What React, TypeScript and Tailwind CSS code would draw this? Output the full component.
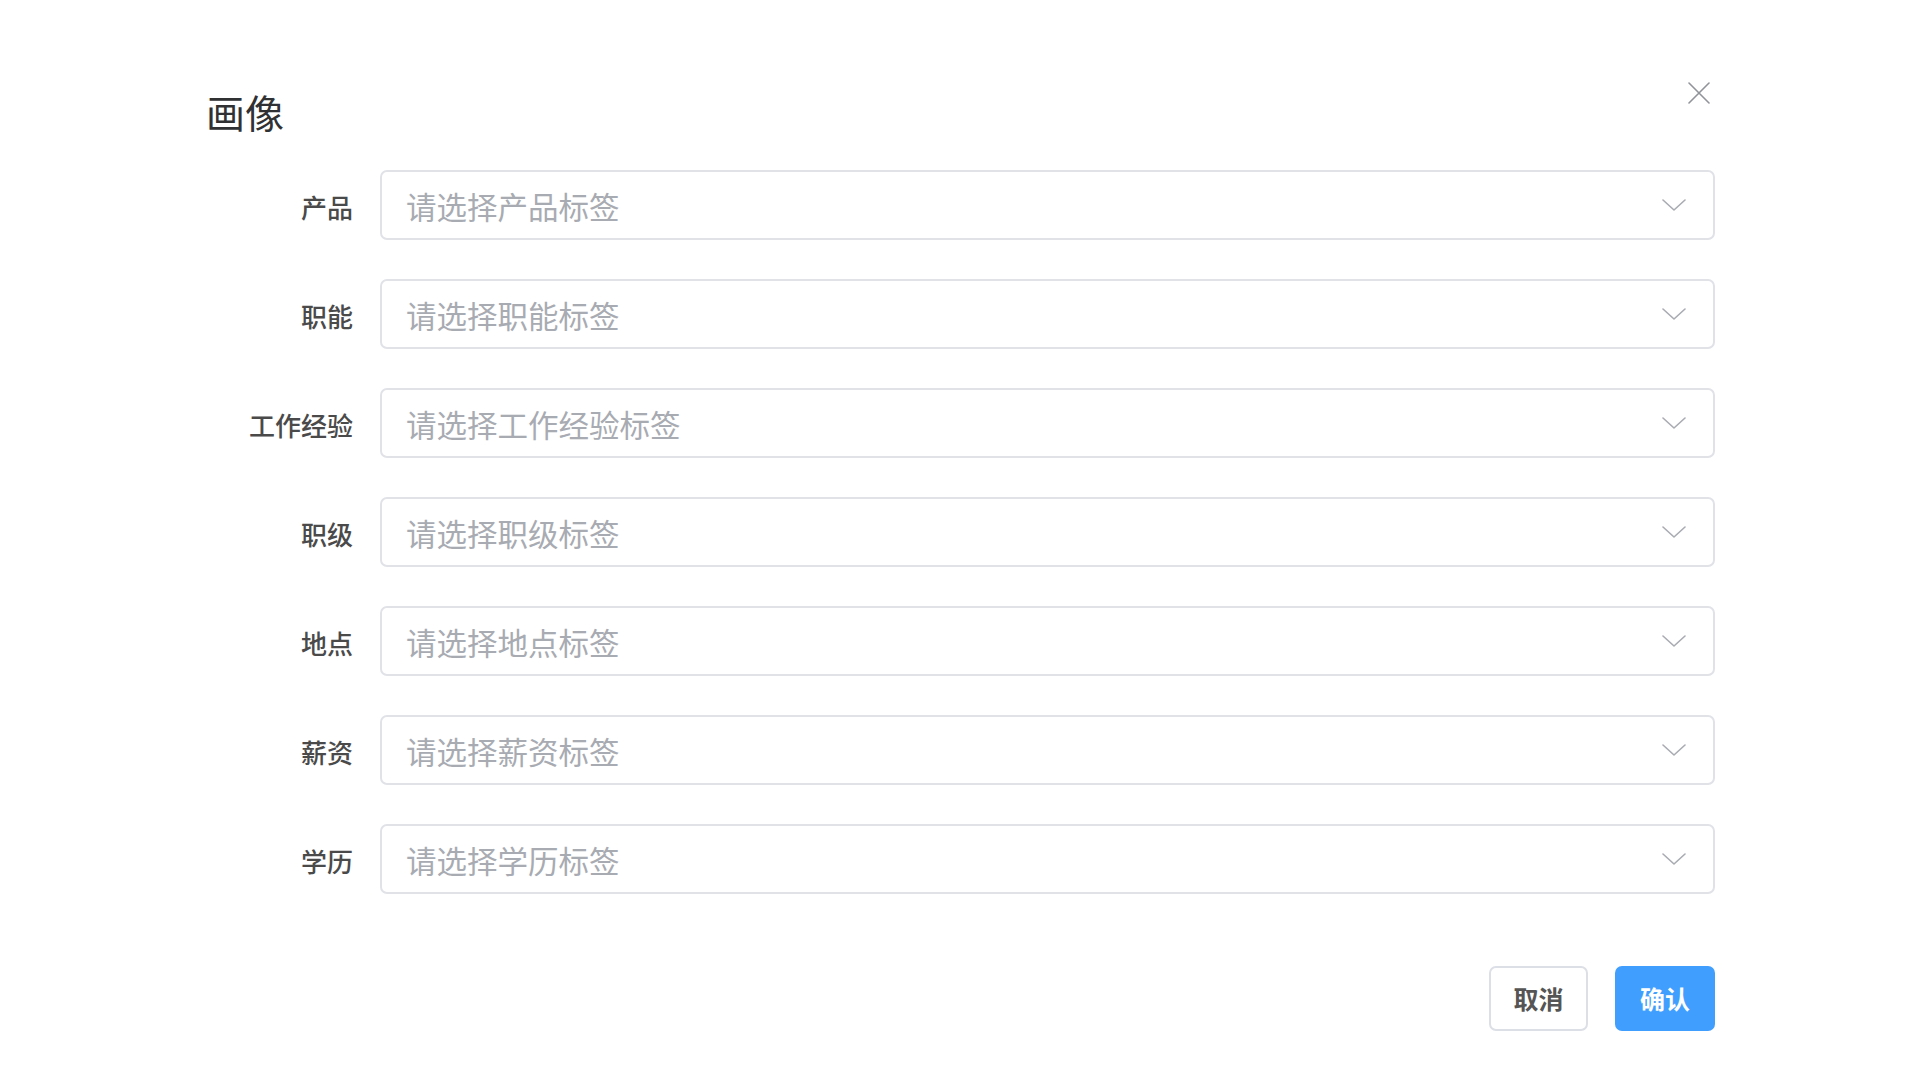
import React from "react";

const fields = [
  { label: "产品", placeholder: "请选择产品标签" },
  { label: "职能", placeholder: "请选择职能标签" },
  { label: "工作经验", placeholder: "请选择工作经验标签" },
  { label: "职级", placeholder: "请选择职级标签" },
  { label: "地点", placeholder: "请选择地点标签" },
  { label: "薪资", placeholder: "请选择薪资标签" },
  { label: "学历", placeholder: "请选择学历标签" },
];

function Chevron() {
  return (
    <svg width="24" height="12" viewBox="0 0 24 12" fill="none">
      <polyline
        points="1,1 12,11 23,1"
        stroke="#a8abb2"
        strokeWidth="1.6"
        strokeLinecap="round"
        strokeLinejoin="round"
      />
    </svg>
  );
}

export default function App() {
  return (
    <div
      className="w-[1920px] h-[1080px] bg-white overflow-hidden"
      style={{ fontFamily: '"Noto Sans CJK SC", "Noto Sans", sans-serif' }}
    >
      <div className="pl-[206px] pr-[205px] pt-[82px]">
        {/* Header */}
        <div className="flex justify-between items-start">
          <h1 className="mt-[10px] text-[39px] leading-[39px] font-normal text-[#303133]">
            画像
          </h1>
          <button className="mr-[5px] text-[#909399]">
            <svg width="22" height="22" viewBox="0 0 22 22" fill="none">
              <path
                d="M1 1L21 21M21 1L1 21"
                stroke="currentColor"
                strokeWidth="1.6"
                strokeLinecap="round"
              />
            </svg>
          </button>
        </div>

        {/* Form */}
        <div className="mt-[39px] flex flex-col gap-[39px]">
          {fields.map((f) => (
            <div key={f.label} className="flex items-center gap-[27px]">
              <label className="w-[147px] pt-[4px] text-right text-[26px] leading-none font-medium text-[#4a4a4a]">
                {f.label}
              </label>
              <div className="flex-1 h-[70px] border-2 border-[#e0e2e8] rounded-[7px] pl-[24px] pr-[27px] flex items-center justify-between">
                <span className="pt-[3px] text-[30.5px] leading-none text-[#a8abb2]">
                  {f.placeholder}
                </span>
                <Chevron />
              </div>
            </div>
          ))}
        </div>

        {/* Footer */}
        <div className="mt-[72px] flex justify-end gap-[27px]">
          <button className="w-[99px] h-[65px] border-2 border-[#dcdfe6] rounded-[7px] bg-white text-[25px] font-bold text-[#555]">
            取消
          </button>
          <button className="w-[100px] h-[65px] rounded-[7px] bg-[#409eff] text-[25px] font-bold text-white">
            确认
          </button>
        </div>
      </div>
    </div>
  );
}
